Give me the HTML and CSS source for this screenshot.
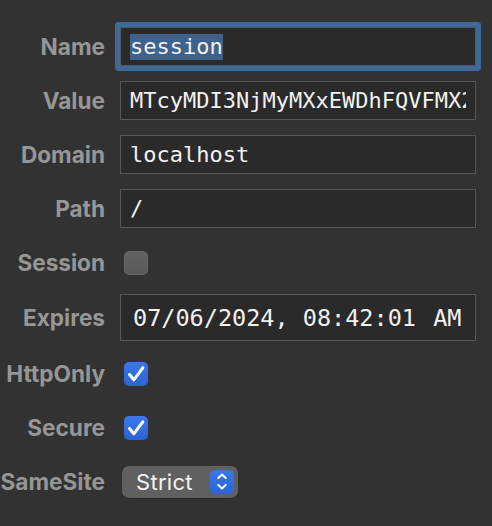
FILE: index.html
```html
<!DOCTYPE html>
<html>
<head>
<meta charset="utf-8">
<link rel="stylesheet" href="styles.css">
</head>
<body>
<div class="form">
  <div class="row">
    <div class="label">Name</div>
    <div class="field focused"><span class="sel">session</span></div>
  </div>
  <div class="row">
    <div class="label">Value</div>
    <div class="field"><span class="clip">MTcyMDI3NjMyMXxEWDhFQVFMX2dBQkVGZ0FCQk</span></div>
  </div>
  <div class="row">
    <div class="label">Domain</div>
    <div class="field">localhost</div>
  </div>
  <div class="row">
    <div class="label">Path</div>
    <div class="field">/</div>
  </div>
  <div class="row">
    <div class="label">Session</div>
    <div class="check"></div>
  </div>
  <div class="row tall">
    <div class="label">Expires</div>
    <div class="field date">07/06/2024, 08:42:01 <span class="ampm">AM</span></div>
  </div>
  <div class="row">
    <div class="label">HttpOnly</div>
    <div class="check on"><svg viewBox="0 0 24 24" width="24" height="24"><path d="M5.5 12.5 L9.8 17.8 L18.8 5.8" fill="none" stroke="#fff" stroke-width="3" stroke-linecap="round" stroke-linejoin="round"/></svg></div>
  </div>
  <div class="row">
    <div class="label">Secure</div>
    <div class="check on"><svg viewBox="0 0 24 24" width="24" height="24"><path d="M5.5 12.5 L9.8 17.8 L18.8 5.8" fill="none" stroke="#fff" stroke-width="3" stroke-linecap="round" stroke-linejoin="round"/></svg></div>
  </div>
  <div class="row">
    <div class="label">SameSite</div>
    <div class="select">
      <span class="select-text">Strict</span>
      <span class="stepper"><svg viewBox="0 0 24 24" width="24" height="24"><path d="M8.3 8 L12 4.5 L15.7 8 M8.3 15 L12 18.5 L15.7 15" fill="none" stroke="#fff" stroke-width="2" stroke-linecap="round" stroke-linejoin="round"/></svg></span>
    </div>
  </div>
</div>
</body>
</html>
```
FILE: styles.css
```css
html, body {
  margin: 0;
  background: #323232;
}
body {
  font-family: Inter, "Liberation Sans", sans-serif;
}
.form {
  display: flex;
  flex-direction: column;
  gap: 15px;
  padding-top: 27px;
}
.row {
  display: flex;
  align-items: center;
  height: 39px;
}
.row.tall {
  height: 47px;
  margin: -3px 0 -2px;
}
.label {
  width: 105px;
  flex: none;
  text-align: right;
  font-weight: 700;
  font-size: 22.6px;
  color: #969696;
}
.field {
  margin-left: 15px;
  width: 356px;
  height: 39px;
  box-sizing: border-box;
  border: 1px solid #575757;
  background: #2a2a2a;
  color: #f2f2f2;
  font-family: "DejaVu Sans Mono", monospace;
  font-size: 22px;
  padding: 0 9px;
  display: flex;
  align-items: center;
  overflow: hidden;
  white-space: nowrap;
}
.field .clip {
  overflow: hidden;
  display: block;
  width: 100%;
}
.field.focused {
  border-radius: 1px;
  box-shadow: 0 0 0 5px #3d6a98;
}
.sel {
  background: #3f628c;
  line-height: 26px;
}
.field.date {
  height: 47px;
  font-size: 23.5px;
  padding-left: 12px;
  white-space: pre;
}
.ampm {
  margin-left: 3px;
}
.check {
  margin-left: 19px;
  width: 24px;
  height: 24px;
  box-sizing: border-box;
  border-radius: 5px;
  background: linear-gradient(#626262, #595959);
  border: 1px solid #6a6a6a;
}
.check.on {
  background: linear-gradient(#3a78ea, #2b63d3);
  border: none;
}
.check svg {
  display: block;
}
.select {
  margin-left: 17px;
  width: 116px;
  height: 32px;
  box-sizing: border-box;
  border-radius: 7px;
  background: #606060;
  box-shadow: 0 1px 1px rgba(0,0,0,0.3);
  display: flex;
  align-items: center;
  justify-content: space-between;
  padding: 0 4px 0 14px;
}
.select-text {
  color: #f4f4f4;
  font-size: 22px;
  letter-spacing: 0.3px;
}
.stepper {
  width: 24px;
  height: 24px;
  border-radius: 5px;
  background: linear-gradient(#3a78ea, #2b63d3);
}
.stepper svg {
  display: block;
}
```
